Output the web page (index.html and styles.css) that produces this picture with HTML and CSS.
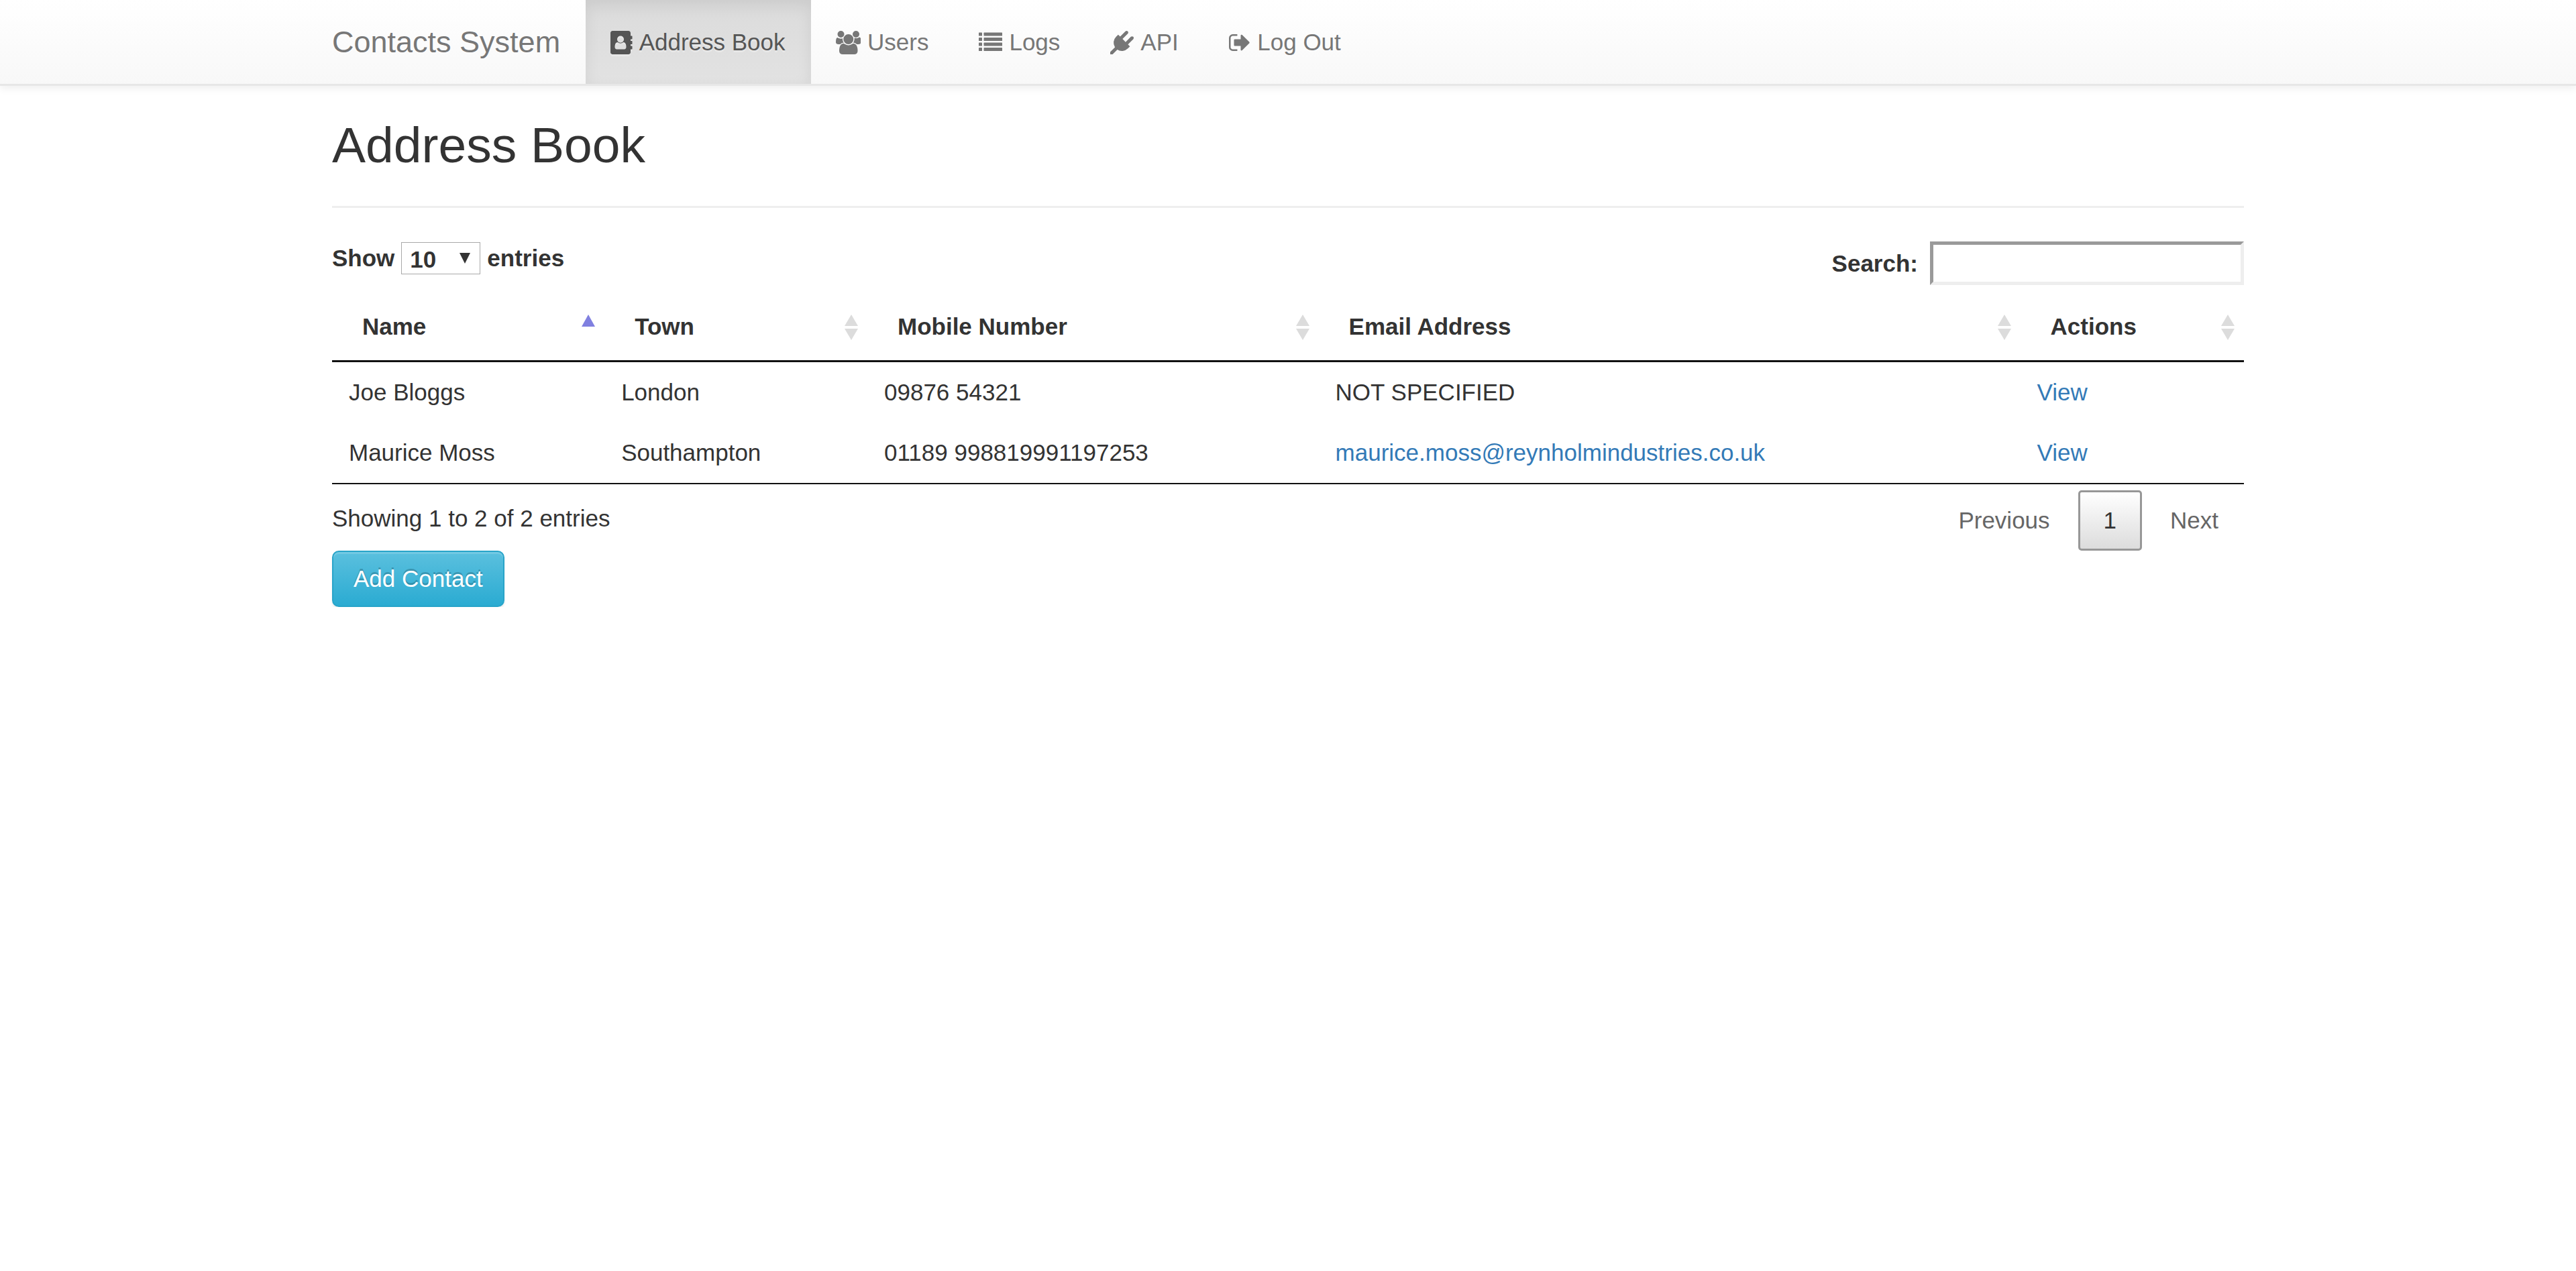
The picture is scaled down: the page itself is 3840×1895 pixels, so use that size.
FILE: index.html
```html
<!DOCTYPE html>
<html lang="en">
<head>
  <meta charset="UTF-8">
  <meta name="viewport" content="width=device-width, initial-scale=1.0">
  <title>Address Book - Contacts System</title>
  <link rel="stylesheet" href="styles.css">
</head>
<body>
  <svg class="sprite" aria-hidden="true">
    <symbol id="sort-both" viewBox="0 0 48 48">
      <path fill="#dcdcdc" d="M24 6l10 17H14zM14 27h20L24 44z"/>
    </symbol>
  </svg>

  <nav class="navbar">
    <div class="container navbar-inner">
      <a class="navbar-brand" href="#">Contacts System</a>
      <ul class="nav">
        <li class="active">
          <a href="#">
            <svg class="icon" viewBox="0 0 1664 1792" aria-hidden="true"><path fill-rule="evenodd" d="M1028 644q0-107-76.500-183t-183.500-76-183.500 76-76.500 183q0 108 76.500 184t183.500 76 183.500-76 76.500-184zm-48 220q46 0 82.500 17t60 47.500 39.500 67 24 81 11.500 82.500 3.500 79q0 67-39.500 118.500t-105.500 51.500h-576q-66 0-105.500-51.500t-39.500-118.500q0-48 4.500-93.500t18.500-98.500 36.500-91.500 63-64.500 93.500-26h5q7 4 32 19.500t35.500 21 33 17 37 16 35 9 39.500 4.500 39.500-4.500 35-9 37-16 33-17 35.500-21 32-19.500zm684-256q0 13-9.500 22.500t-22.500 9.500h-96v128h96q13 0 22.500 9.500t9.500 22.500v192q0 13-9.500 22.500t-22.500 9.500h-96v128h96q13 0 22.500 9.500t9.500 22.500v192q0 13-9.500 22.500t-22.500 9.500h-96v224q0 66-47 113t-113 47h-1216q-66 0-113-47t-47-113v-1472q0-66 47-113t113-47h1216q66 0 113 47t47 113v224h96q13 0 22.500 9.500t9.500 22.500v192z"/></svg>
            Address Book
          </a>
        </li>
        <li>
          <a href="#">
            <svg class="icon" viewBox="0 0 1920 1792" aria-hidden="true"><path d="M593 896q-162 5-265 128h-134q-82 0-138-40.500t-56-118.500q0-353 124-353 6 0 43.500 21t97.500 42.500 119 21.500q67 0 133-23-5 37-5 66 0 159 90 287zm1071 637q0 120-73 189.500t-194 69.500h-874q-121 0-194-69.500t-73-189.500q0-53 3.500-103.500t14-109 26.500-108.500 43-97.500 62-81 85.500-53.500 111.500-20q10 0 43 21.500t73 48 107 48 135 21.500 135-21.500 107-48 73-48 43-21.500q61 0 111.500 20t85.500 53.500 62 81 43 97.500 26.500 108.500 14 109 3.500 103.500zm-1024-1277q0 106-75 181t-181 75-181-75-75-181 75-181 181-75 181 75 75 181zm704 384q0 159-112.500 271.500t-271.500 112.500-271.500-112.500-112.500-271.500 112.500-271.500 271.500-112.500 271.500 112.500 112.500 271.500zm576 225q0 78-56 118.500t-138 40.500h-134q-103-123-265-128 90-128 90-287 0-29-5-66 66 23 133 23 59 0 119-21.500t97.500-42.500 43.500-21q124 0 124 353zm-128-609q0 106-75 181t-181 75-181-75-75-181 75-181 181-75 181 75 75 181z"/></svg>
            Users
          </a>
        </li>
        <li>
          <a href="#">
            <svg class="icon" viewBox="0 0 1792 1792" aria-hidden="true">
              <rect x="0" y="128" width="256" height="256" rx="32"/><rect x="384" y="128" width="1408" height="256" rx="32"/>
              <rect x="0" y="512" width="256" height="256" rx="32"/><rect x="384" y="512" width="1408" height="256" rx="32"/>
              <rect x="0" y="896" width="256" height="256" rx="32"/><rect x="384" y="896" width="1408" height="256" rx="32"/>
              <rect x="0" y="1280" width="256" height="256" rx="32"/><rect x="384" y="1280" width="1408" height="256" rx="32"/>
            </svg>
            Logs
          </a>
        </li>
        <li>
          <a href="#">
            <svg class="icon" viewBox="0 0 1792 1792" aria-hidden="true"><path d="M1755 453q37 38 37 90.500t-37 90.500l-401 400 150 150-160 160q-163 163-389.500 186.500t-411.500-100.500l-362 362h-181v-181l362-362q-124-185-100.500-411.500t186.500-389.500l160-160 150 150 400-401q38-37 91-37t90 37 37 90.500-37 90.500l-400 401 234 234 401-400q38-37 91-37t90 37z"/></svg>
            API
          </a>
        </li>
        <li>
          <a href="#">
            <svg class="icon" viewBox="0 0 1664 1792" aria-hidden="true"><path d="M640 1440q0 4 1 20t.5 26.500-3 23.500-10 19.500-20.500 6.500h-320q-119 0-203.500-84.500t-84.500-203.500v-704q0-119 84.500-203.500t203.500-84.500h320q13 0 22.500 9.500t9.500 22.500q0 4 1 20t.5 26.500-3 23.500-10 19.500-20.500 6.500h-320q-66 0-113 47t-47 113v704q0 66 47 113t113 47h312l11.500 1 11.500 3 8 5.500 7 9 2 13.500zm928-544q0 26-19 45l-544 544q-19 19-45 19t-45-19-19-45v-288h-448q-26 0-45-19t-19-45v-384q0-26 19-45t45-19h448v-288q0-26 19-45t45-19 45 19l544 544q19 19 19 45z"/></svg>
            Log Out
          </a>
        </li>
      </ul>
    </div>
  </nav>

  <main class="container">
    <h2>Address Book</h2>
    <hr>

    <div class="table-controls">
      <label class="length">
        Show
        <select name="length">
          <option selected>10</option>
          <option>25</option>
          <option>50</option>
          <option>100</option>
        </select>
        entries
      </label>
      <label class="filter">
        Search:
        <input type="search" name="search">
      </label>
    </div>

    <table class="contacts">
      <colgroup>
        <col class="col-name">
        <col class="col-town">
        <col class="col-mobile">
        <col class="col-email">
        <col class="col-actions">
      </colgroup>
      <thead>
        <tr>
          <th aria-sort="ascending">
            <div class="heading">Name <svg class="sort" viewBox="0 0 48 48" aria-hidden="true"><path fill="#8080e0" d="M24 6l10 18H14z"/></svg></div>
          </th>
          <th><div class="heading">Town <svg class="sort" aria-hidden="true"><use href="#sort-both"/></svg></div></th>
          <th><div class="heading">Mobile Number <svg class="sort" aria-hidden="true"><use href="#sort-both"/></svg></div></th>
          <th><div class="heading">Email Address <svg class="sort" aria-hidden="true"><use href="#sort-both"/></svg></div></th>
          <th><div class="heading">Actions <svg class="sort" aria-hidden="true"><use href="#sort-both"/></svg></div></th>
        </tr>
      </thead>
      <tbody>
        <tr>
          <td>Joe Bloggs</td>
          <td>London</td>
          <td>09876 54321</td>
          <td>NOT SPECIFIED</td>
          <td><a href="#">View</a></td>
        </tr>
        <tr>
          <td>Maurice Moss</td>
          <td>Southampton</td>
          <td>01189 998819991197253</td>
          <td><a href="mailto:maurice.moss@reynholmindustries.co.uk">maurice.moss@reynholmindustries.co.uk</a></td>
          <td><a href="#">View</a></td>
        </tr>
      </tbody>
    </table>

    <div class="table-footer">
      <div class="info">Showing 1 to 2 of 2 entries</div>
      <div class="pagination">
        <button type="button" class="page disabled">Previous</button>
        <button type="button" class="page current">1</button>
        <button type="button" class="page disabled">Next</button>
      </div>
    </div>

    <button type="button" class="btn">Add Contact</button>
  </main>
</body>
</html>
```
FILE: styles.css
```css
* {
  box-sizing: border-box;
}

body {
  margin: 0;
  background: #fff;
  color: #333;
  font-family: "Liberation Sans", Arial, sans-serif;
  font-size: 35px;
  line-height: 50px;
}

a {
  color: #337ab7;
  text-decoration: none;
}

.sprite {
  display: none;
}

.container {
  max-width: 2850px;
  margin: 0 auto;
}

/* navbar */
.navbar {
  background: linear-gradient(to bottom, #fff 0%, #f8f8f8 100%);
  border-bottom: 3px solid #e7e7e7;
  box-shadow: 0 3px 12px rgba(0, 0, 0, 0.075);
}

.navbar-inner {
  display: flex;
}

.navbar-brand {
  padding: 38px 38px 37px 0;
  color: #777;
  font-size: 45px;
  text-shadow: 0 3px 0 rgba(255, 255, 255, 0.25);
}

.nav {
  display: flex;
  margin: 0;
  padding: 0;
  list-style: none;
}

.nav a {
  display: flex;
  align-items: center;
  gap: 10px;
  padding: 38px 38px 37px 37px;
  color: #777;
  text-shadow: 0 3px 0 rgba(255, 255, 255, 0.25);
}

.nav .active a {
  color: #555;
  background: linear-gradient(to bottom, #dbdbdb 0%, #e2e2e2 100%);
  box-shadow: inset 0 8px 22px rgba(0, 0, 0, 0.075);
}

.icon {
  height: 35px;
  fill: currentColor;
}

.active .icon {
  filter: drop-shadow(0 3px 0 rgba(255, 255, 255, 0.25));
}

/* page heading */
h2 {
  margin: 47px 0 50px;
  font-size: 75px;
  font-weight: normal;
  line-height: 82px;
}

hr {
  margin: 0 0 50px;
  border: 0;
  border-top: 3px solid #eee;
}

/* length menu and search box */
.table-controls {
  display: flex;
  justify-content: space-between;
  align-items: flex-start;
  margin-bottom: 12px;
}

.table-controls label {
  display: flex;
  align-items: center;
  gap: 10px;
  font-weight: bold;
}

.table-controls select {
  appearance: none;
  width: 118px;
  height: 48px;
  padding: 0 12px 2px;
  border: 1px solid #a9a9a9;
  border-radius: 0;
  background: #fff url("data:image/svg+xml,%3Csvg xmlns='http://www.w3.org/2000/svg' viewBox='0 0 16 16'%3E%3Cpath fill='%23333' d='M0 0h16L8 16z'/%3E%3C/svg%3E") no-repeat right 14px center / 16px 16px;
  color: #333;
  font: inherit;
}

.table-controls .filter {
  gap: 18px;
}

.table-controls input {
  width: 468px;
  height: 65px;
  padding: 3px;
  border: 5px solid;
  border-color: #9a9a9a #eee #eee #9a9a9a;
  background: #fff;
  color: #333;
  font: inherit;
  font-weight: normal;
}

/* contacts table */
.contacts {
  width: 100%;
  table-layout: fixed;
  border-collapse: separate;
  border-spacing: 0;
  border-bottom: 2px solid #111;
}

.col-name {
  width: 14.25%;
}

.col-town {
  width: 13.75%;
}

.col-mobile {
  width: 23.6%;
}

.col-email {
  width: 36.7%;
}

.col-actions {
  width: 11.7%;
}

.contacts th {
  padding: 25px 0 25px 45px;
  border-bottom: 3px solid #111;
  text-align: left;
}

.contacts td {
  padding: 20px 25px;
}

.heading {
  display: flex;
  justify-content: space-between;
  align-items: center;
}

.sort {
  width: 48px;
  height: 48px;
}

/* info and paging */
.table-footer {
  display: flex;
  justify-content: space-between;
  align-items: flex-start;
  padding-top: 9px;
}

.info {
  padding-top: 17px;
}

.pagination {
  display: flex;
  gap: 4px;
}

.page {
  padding: 17px 35px;
  border: 3px solid transparent;
  border-radius: 5px;
  background: none;
  color: #333;
  font: inherit;
  cursor: pointer;
}

.page.current {
  border-color: #979797;
  background: linear-gradient(to bottom, #fff 0%, #dcdcdc 100%);
}

.page.disabled {
  color: #666;
  cursor: default;
}

.btn {
  display: block;
  padding: 15px 30px;
  border: 2px solid #28a4c9;
  border-radius: 10px;
  background: linear-gradient(to bottom, #5bc0de 0%, #2aabd2 100%);
  box-shadow: inset 0 3px 0 rgba(255, 255, 255, 0.15), 0 3px 3px rgba(0, 0, 0, 0.075);
  color: #fff;
  font: inherit;
  text-shadow: 0 -3px 0 rgba(0, 0, 0, 0.2);
  cursor: pointer;
}
```
